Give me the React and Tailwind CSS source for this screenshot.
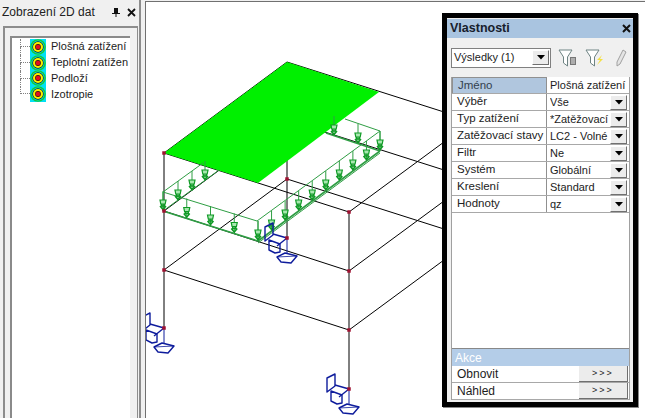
import React from "react";

const font = { fontFamily: '"Liberation Sans", Arial, sans-serif' };

function TreeIcon() {
  return (
    <svg width="16" height="16" viewBox="0 0 16 16" className="shrink-0">
      <rect width="16" height="16" fill="#00e0f4" />
      <circle cx="8" cy="8" r="7.8" fill="#18c830" />
      <circle cx="8" cy="8" r="6.4" fill="#00e0f4" />
      <circle cx="8" cy="8" r="5.7" fill="#0a2a10" />
      <circle cx="8" cy="8" r="5" fill="#f8f000" />
      <circle cx="8" cy="8" r="2.9" fill="#301010" />
      <circle cx="8" cy="8" r="2.3" fill="#e01020" />
    </svg>
  );
}

function TreeRow({ label, last }) {
  return (
    <div className="flex h-[15.75px] items-center relative">
      <span className="w-[10px] h-[8px] border-l border-b border-dotted border-[#808080] self-start" />
      {!last && <span className="absolute left-0 top-[8px] h-[8px] border-l border-dotted border-[#808080]" />}
      <TreeIcon />
      <span className="ml-[5px] text-[11px] leading-none whitespace-nowrap text-[#1c1c1c]">{label}</span>
    </div>
  );
}

function Dropdown() {
  return (
    <span className="w-[17px] h-[15px] bg-[#ececec] border-r border-b border-[#707070] border-t-white border-l-white border-t border-l flex items-center justify-center shrink-0">
      <svg width="8" height="5" viewBox="0 0 8 5"><path d="M0 0h8L4 4.5z" fill="#000" /></svg>
    </span>
  );
}

function PropRow({ name, value, head, arrow = true }) {
  return (
    <div className="flex h-[17px] border-b border-[#a8a8a8] leading-none">
      <div
        className={
          "w-[95px] shrink-0 border-r border-[#909090] flex items-center pl-[5px] whitespace-nowrap text-[11.5px] " +
          (head ? "bg-[#b0c6de] text-[#33404e] border-t border-l border-[#606060]" : "text-[#222]")
        }
      >
        {name}
      </div>
      <div className="flex-1 min-w-0 flex items-center pl-[3px] overflow-hidden text-[11px]">
        <span className="flex-1 min-w-0 overflow-hidden whitespace-nowrap text-[#1c1c1c]">{value}</span>
        {arrow && <Dropdown />}
        {arrow && <span className="w-[2px] shrink-0" />}
      </div>
    </div>
  );
}

function ActionRow({ label }) {
  return (
    <div className="flex h-[17px] border-b border-[#a8a8a8] text-[12px] leading-none items-center">
      <span className="flex-1 pl-[5px] text-[#1c1c1c]">{label}</span>
      <span className="w-[49px] h-[16px] mr-[1px] bg-[#ececec] border-r border-b border-[#707070] flex items-center justify-center text-[9px] tracking-[2px] text-[#222]">
        &gt;&gt;&gt;
      </span>
    </div>
  );
}

const lerp = (a, b, t) => [a[0] + (b[0] - a[0]) * t, a[1] + (b[1] - a[1]) * t];

function Arrow({ x, y }) {
  return (
    <g stroke="#0e9a24" fill="none" strokeWidth="1.2">
      <path d={`M${x - 3} ${y - 4}h6l-0.8 4h-4.4z`} fill="#a8e8b0" />
      <path d={`M${x - 1.5} ${y}v2h3v-2M${x - 3} ${y + 2}L${x} ${y + 5.5}L${x + 3} ${y + 2}`} strokeWidth="1.5" />
    </g>
  );
}

function Support({ x, y }) {
  return (
    <g transform={`translate(${x} ${y})`} stroke="#0e1c9c" fill="none" strokeWidth="1.4" strokeLinejoin="round">
      <path d="M-22 -11L-14 -15V-3L-22 3Z" />
      <path d="M-14 -4L0 0L-10 8" />
      <path d="M-18 2L-7 6V14L-12 15L-18 12Z" />
      <path d="M0 0V16" strokeWidth="1" />
      <path d="M-10 19L-2 15L10 18L4 25L-6 24Z" />
      <path d="M-10 19L10 18" strokeWidth="0.8" />
    </g>
  );
}

const black = [
  "M163 151V326",
  "M348 210V387",
  "M286 60V236",
  "M163 151L348 210",
  "M163 209L348 269",
  "M163 268L348 328",
  "M286 60L443 110",
  "M286 118L443 168",
  "M286 177L443 227",
  "M286 60L163 151",
  "M286 118L163 209",
  "M286 177L163 268",
  "M348 210L443 140",
  "M348 269L443 199",
  "M348 328L443 258",
];

const nodes = [
  [163, 151], [163, 209], [163, 268], [163, 326],
  [286, 177], [286, 236],
  [348, 210], [348, 269], [348, 328], [348, 387],
];

function Frame() {
  const g = "#2f9e44";
  const frontB = [162, 209], midB = [257, 239], rightB = [379, 149];
  const front = [0, 0.25, 0.5, 0.75, 1].map((t) => lerp(frontB, midB, t));
  const side = [1 / 9, 2 / 9, 3 / 9, 4 / 9, 5 / 9, 6 / 9, 7 / 9, 8 / 9, 1].map((t) => lerp(midB, rightB, t));
  const left = [[177, 199], [191, 189], [204, 179]];
  const back = [[357, 142], [333, 134]];
  const all = [...front, ...side, ...left, ...back];
  return (
    <svg width="500" height="418" viewBox="145 0 500 418" className="block">
      {black.map((d) => (
        <path key={d} d={d} stroke="#000" strokeWidth="1" fill="none" />
      ))}
      <path d="M163 151L286 60L378 90L257 181Z" fill="#00f000" />
      <g stroke={g} fill="none" strokeWidth="1">
        <path d="M162 190L256 219L379 129L344 117" />
        <path d="M162 190L202 161" />
        <path d="M162 209V190M257 239V219M379 149V129" />
        <path d="M162 209L218 168" />
        <path d="M325 131L379 149" strokeWidth="1.5" />
        <path d="M257 241L379 151" />
        <path d="M162 209L257 239L379 149" strokeWidth="1.6" />
        {all.map(([x, y], i) => (
          <path key={i} d={`M${x} ${y}V${y - 20}`} />
        ))}
      </g>
      {all.map(([x, y], i) => (
        <Arrow key={i} x={x} y={y - 7} />
      ))}
      <Support x={163} y={326} />
      <Support x={286} y={236} />
      <Support x={348} y={387} />
      {nodes.map(([x, y]) => (
        <rect key={x + "-" + y} x={x - 1.75} y={y - 1.75} width="3.5" height="3.5" fill="#a01030" />
      ))}
    </svg>
  );
}

function FilterIcon({ children }) {
  return (
    <svg width="20" height="20" viewBox="0 0 20 20" className="shrink-0">
      <path d="M1 2H14L9.5 9V18L5.5 15V9Z" fill="#fff" stroke="#6f8484" strokeWidth="1" />
      {children}
    </svg>
  );
}

export default function App() {
  return (
    <div className="relative w-[645px] h-[418px] overflow-hidden bg-[#f0f0f0] flex" style={font}>
      <div className="w-[139px] shrink-0 flex flex-col">
        <div className="h-[24px] flex items-center pl-[2px] pr-[3px] shrink-0">
          <span className="flex-1 text-[12px] text-[#222] whitespace-nowrap">Zobrazení 2D dat</span>
          <svg width="10" height="11" viewBox="0 0 10 11" className="mr-[6px]">
            <path d="M3 1H7V6H9V7H5.5V10H4.5V7H1V6H3Z" fill="#111" />
          </svg>
          <svg width="9" height="9" viewBox="0 0 9 9">
            <path d="M1 1L8 8M8 1L1 8" stroke="#111" strokeWidth="1.8" />
          </svg>
        </div>
        <div className="flex-1 ml-[3px] mr-[1px] mt-[2px] border-l-2 border-t-2 border-r border-[#8c8c8c] pl-[5px] pr-[7px] pt-[8px] min-h-0 overflow-hidden">
          <div className="h-[400px] border-l-2 border-t-2 border-[#8a8a8a] bg-white pl-[8px] pt-[1px] overflow-hidden">
            <TreeRow label="Plošná zatížení" />
            <TreeRow label="Teplotní zatížen" />
            <TreeRow label="Podloží" />
            <TreeRow label="Izotropie" last />
          </div>
        </div>
      </div>
      <div className="w-[2px] bg-[#8c8c8c] shrink-0" />
      <div className="w-[4px] shrink-0" />
      <div className="flex-1 min-w-0 bg-white border-l border-t border-[#707070] mt-[1px]">
        <Frame />
      </div>

      <div className="absolute left-[442px] top-[13px] w-[196px] h-[394px] bg-[#f0f0f0] border-[5px] border-black flex flex-col shadow-[1px_1px_0_#888]">
        <div className="h-[19px] shrink-0 bg-[#a9c4e0] flex items-center pl-[3px] pr-[2px] mt-[1px]">
          <span className="flex-1 text-[12.5px] font-bold text-[#17202c]">Vlastnosti</span>
          <svg width="9" height="9" viewBox="0 0 9 9"><path d="M1 1L8 8M8 1L1 8" stroke="#111" strokeWidth="2" /></svg>
        </div>
        <div className="h-[39px] shrink-0 flex items-center pl-[4px] gap-[7px]">
          <div className="w-[100px] h-[20px] bg-white border border-[#808080] flex items-center text-[11px] pl-[2px] pr-[1px] text-[#1c1c1c]">
            <span className="flex-1 whitespace-nowrap">Výsledky (1)</span>
            <Dropdown />
          </div>
          <FilterIcon>
            <path d="M12 9H18V17H12Z" fill="#777" />
            <path d="M13 11H17M13 13H17M13 15H17" stroke="#fff" strokeWidth="0.8" />
          </FilterIcon>
          <FilterIcon>
            <path d="M17 7L12 12H15L12 17L18 11H15Z" fill="#f4e040" />
          </FilterIcon>
          <svg width="12" height="18" viewBox="0 0 12 18" className="ml-[3px] shrink-0">
            <path d="M8 1L11 3L5 15L2 17L2 13Z" fill="#e4e4e4" stroke="#a0a0a0" />
          </svg>
        </div>
        <div className="flex-1 min-h-0 ml-[4px] mr-[3px] bg-white border-x border-[#a0a0a0] flex flex-col">
          <div className="flex-1 min-h-0">
            <PropRow head name="Jméno" value="Plošná zatížení" arrow={false} />
            <PropRow name="Výběr" value="Vše" />
            <PropRow name="Typ zatížení" value="*Zatěžovací" />
            <PropRow name="Zatěžovací stavy" value="LC2 - Volné z" />
            <PropRow name="Filtr" value="Ne" />
            <PropRow name="Systém" value="Globální" />
            <PropRow name="Kreslení" value="Standard" />
            <PropRow name="Hodnoty" value="qz" />
          </div>
          <div className="h-[18px] shrink-0 bg-[#b4cde8] border-t border-[#888] flex items-center pl-[3px] text-[12px] text-white">Akce</div>
          <ActionRow label="Obnovit" />
          <ActionRow label="Náhled" />
        </div>
        <div className="h-[2px] shrink-0" />
      </div>
    </div>
  );
}
